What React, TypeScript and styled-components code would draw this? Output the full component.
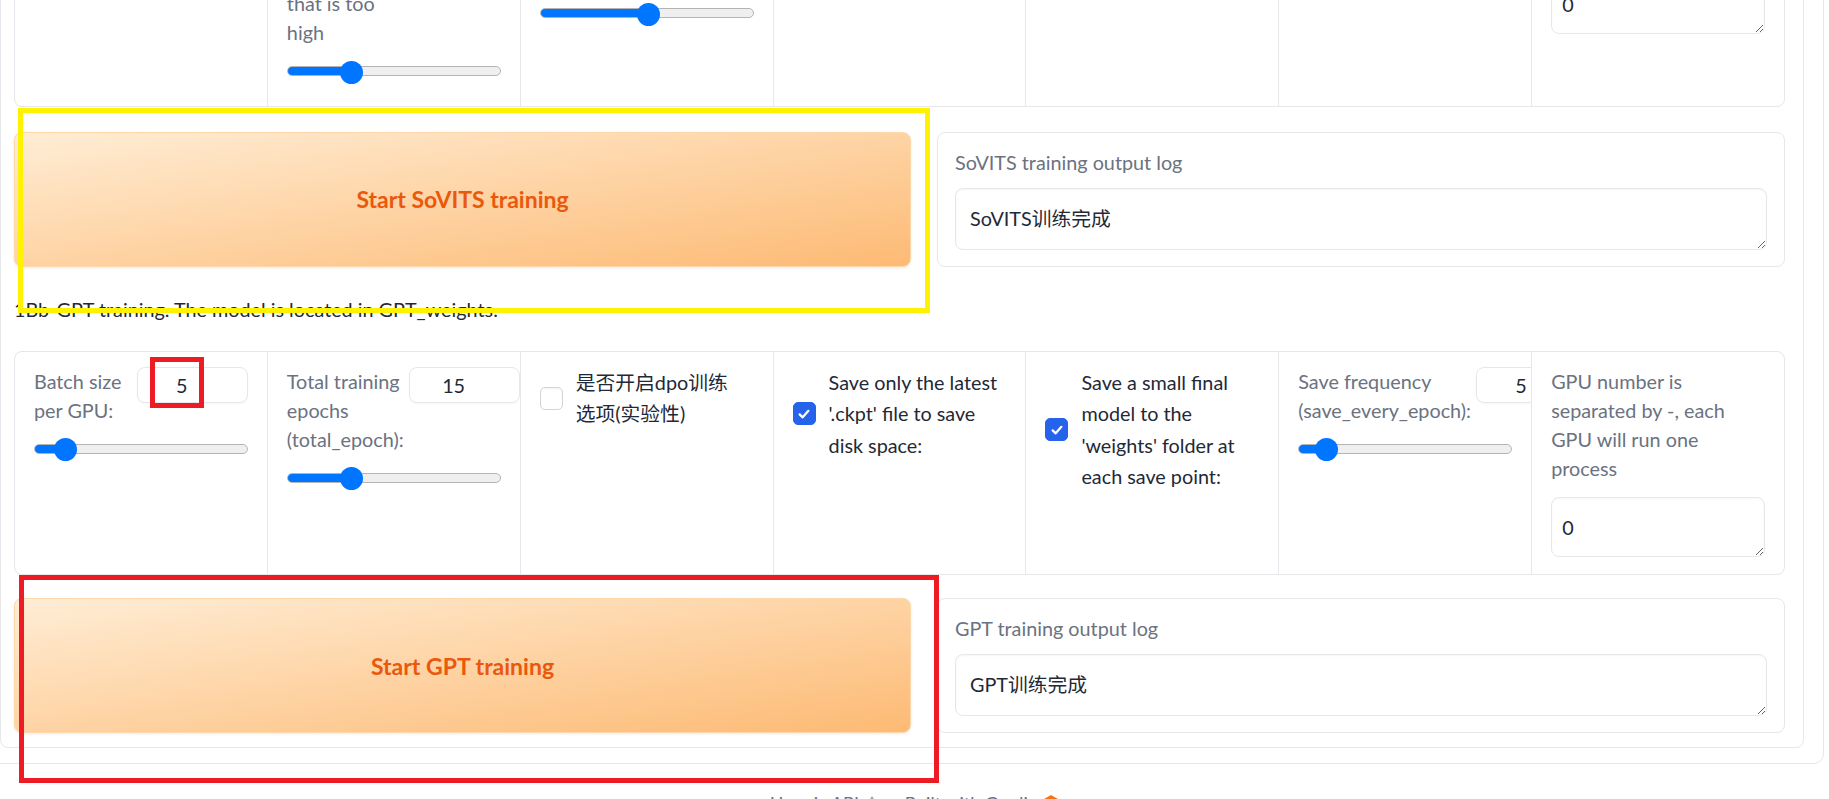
import React from 'react';
import styled, { createGlobalStyle } from 'styled-components';

const GlobalStyle = createGlobalStyle`
  html, body { margin: 0; padding: 0; overflow: hidden; background: #ffffff; }
  body {
    font-family: Lato, "Noto Sans CJK SC", sans-serif;
    font-size: 19.8px;
    color: #1f2937;
  }
  *, *::before, *::after { box-sizing: border-box; }
`;

const Viewport = styled.div`
  position: relative;
  width: 1829px;
  height: 799px;
  overflow: hidden;
`;

const Outer = styled.div`
  margin: -174px 0 0 -16px;
  width: 1840px;
  border: 1px solid #e5e7eb;
  border-radius: 0 0 10px 10px;
  padding: 0 19px 15px 15px;
`;

const Inner = styled.div`
  border: 1px solid #e5e7eb;
  border-radius: 0 0 8px 8px;
  padding: 0 18px 14px 13px;
  display: flex;
  flex-direction: column;
  gap: 25px;
`;

const Panel = styled.div`
  display: grid;
  grid-template-columns: repeat(7, minmax(0, 1fr));
  gap: 1px;
  background: #e5e7eb;
  border: 1px solid #e5e7eb;
  border-radius: 8px;
  overflow: hidden;
`;

const Cell = styled.div`
  background: #ffffff;
  padding: 15px 19px 17.5px;
  overflow: hidden;
  min-width: 0;
  display: flex;
  flex-direction: column;
`;

const Field = styled.div`
  display: flex;
  flex-direction: column;
`;

const Info = styled.span`
  color: #6b7280;
  line-height: 29px;
`;

const SliderHead = styled.div`
  display: flex;
  align-items: flex-start;
  gap: 5px;
  & > ${Info} {
    flex: 1 1 0;
  }
`;

const Line = styled.span`
  display: block;
  white-space: nowrap;
`;

const NumberBox = styled.input`
  flex: none;
  width: 111px;
  height: 36px;
  border: 1px solid #e5e7eb;
  border-radius: 8px;
  padding: 0 21px 0 0;
  text-align: center;
  font: inherit;
  color: #1f2937;
  background: #ffffff;
  box-shadow: 0 1px 2px rgba(0, 0, 0, 0.03);
  outline: none;
`;

const Range = styled.input.attrs({ type: 'range' })<{ $fill: number }>`
  -webkit-appearance: none;
  appearance: none;
  display: block;
  width: 100%;
  height: 34px;
  margin: 7px 0 0;
  padding: 0;
  background: transparent;
  &::-webkit-slider-runnable-track {
    height: 10px;
    border-radius: 6px;
    border: 1px solid #b4b4b4;
    background: linear-gradient(
      to right,
      #0075ff ${(p) => p.$fill}%,
      #efefef ${(p) => p.$fill}%
    );
  }
  &::-webkit-slider-thumb {
    -webkit-appearance: none;
    appearance: none;
    width: 23px;
    height: 23px;
    border: none;
    border-radius: 50%;
    background: #0075ff;
    margin-top: -6.5px;
  }
`;

const GpuArea = styled.textarea`
  display: block;
  width: 100%;
  height: 60px;
  margin-top: 14px;
  padding: 15px 10px 15px 10px;
  border: 1px solid #e5e7eb;
  border-radius: 8px;
  font: inherit;
  line-height: 29px;
  color: #1f2937;
  background: #ffffff;
  box-shadow: inset 0 1px 2px rgba(0, 0, 0, 0.03);
  resize: vertical;
  outline: none;
`;

const CheckRow = styled.label`
  display: flex;
  align-items: center;
  gap: 13px;
`;

const Box = styled.span<{ $on: boolean }>`
  flex: none;
  width: 23px;
  height: 23px;
  border-radius: 5px;
  display: grid;
  place-items: center;
  background: ${(p) => (p.$on ? '#2563eb' : '#ffffff')};
  border: 1px solid ${(p) => (p.$on ? '#2563eb' : '#d1d5db')};
  box-shadow: ${(p) => (p.$on ? 'none' : 'inset 0 1px 2px rgba(0,0,0,0.05)')};
`;

const CheckText = styled.span`
  line-height: 31.5px;
  color: #1f2937;
`;

const Row = styled.div<{ $pull?: boolean }>`
  display: grid;
  grid-template-columns: 897px 1fr;
  gap: 26px;
  margin-top: ${(p) => (p.$pull ? '-2px' : '0')};
`;

const PrimaryButton = styled.button`
  border: 1px solid #fed7aa;
  border-radius: 8px;
  background: linear-gradient(to bottom right, #ffedd5, #fdba74);
  color: #ea580c;
  font: inherit;
  font-weight: 700;
  font-size: 23px;
  box-shadow: 0 1px 3px rgba(0, 0, 0, 0.08);
  cursor: pointer;
`;

const LogBox = styled.div`
  border: 1px solid #e5e7eb;
  border-radius: 8px;
  padding: 15px 17px 16px 17px;
  display: flex;
  flex-direction: column;
  gap: 11px;
  background: #ffffff;
`;

const LogLabel = styled.span`
  color: #6b7280;
  line-height: 29px;
`;

const LogArea = styled.textarea`
  display: block;
  width: 100%;
  height: 62px;
  padding: 15px 14px;
  border: 1px solid #e5e7eb;
  border-radius: 8px;
  font: inherit;
  line-height: 29px;
  color: #1f2937;
  background: #ffffff;
  box-shadow: inset 0 1px 2px rgba(0, 0, 0, 0.04);
  resize: vertical;
  outline: none;
`;

const Note = styled.p`
  margin: 0;
  line-height: 34px;
  color: #1f2937;
`;

const Footer = styled.footer`
  display: flex;
  justify-content: center;
  align-items: center;
  gap: 10px;
  margin-top: 27px;
  color: #6b7280;
  font-size: 18px;
  line-height: 24px;
`;

const FootLink = styled.span`
  display: inline-flex;
  align-items: center;
  gap: 5px;
`;

const Mark = styled.div<{ $x: number; $y: number; $w: number; $h: number; $c: string }>`
  position: absolute;
  left: ${(p) => p.$x}px;
  top: ${(p) => p.$y}px;
  width: ${(p) => p.$w}px;
  height: ${(p) => p.$h}px;
  border: 5px solid ${(p) => p.$c};
  pointer-events: none;
`;

const lines = (arr: string[]) => arr.map((t, i) => <Line key={i}>{t}</Line>);

const SAVE_LATEST = ['Save only the latest', "'.ckpt' file to save", 'disk space:'];
const SAVE_WEIGHTS = ['Save a small final', 'model to the', "'weights' folder at", 'each save point:'];
const GPU_INFO = ['GPU number is', 'separated by -, each', 'GPU will run one', 'process'];

type SliderProps = { label: React.ReactNode; value: string; frac: number };

function SliderField({ label, value, frac }: SliderProps) {
  const fill = ((11.5 + frac * (212 - 23)) / 212) * 100;
  return (
    <Field>
      <SliderHead>
        <Info>{label}</Info>
        <NumberBox readOnly value={value} />
      </SliderHead>
      <Range $fill={fill} min={0} max={1000} defaultValue={Math.round(frac * 1000)} />
    </Field>
  );
}

function CheckField({ on, children }: { on: boolean; children: React.ReactNode }) {
  return (
    <CheckRow>
      <Box $on={on}>
        {on && (
          <svg width="14" height="14" viewBox="0 0 16 16" fill="none">
            <path d="M3 8.4 L6.5 11.8 L13 4.4" stroke="#ffffff" strokeWidth="2.6" strokeLinecap="round" strokeLinejoin="round" />
          </svg>
        )}
      </Box>
      <CheckText>{children}</CheckText>
    </CheckRow>
  );
}

function GpuField() {
  return (
    <Field>
      <Info>{lines(GPU_INFO)}</Info>
      <GpuArea readOnly value="0" />
    </Field>
  );
}

function TrainRow({ button, label, log, pull }: { button: string; label: string; log: string; pull?: boolean }) {
  return (
    <Row $pull={pull}>
      <PrimaryButton>{button}</PrimaryButton>
      <LogBox>
        <LogLabel>{label}</LogLabel>
        <LogArea readOnly value={log} />
      </LogBox>
    </Row>
  );
}

export default function App() {
  return (
    <Viewport>
      <GlobalStyle />
      <Outer>
        <Inner>
          <Panel>
            <Cell>
              <SliderField label="Batch size per GPU:" value="5" frac={0.1} />
            </Cell>
            <Cell>
              <SliderField
                label={lines(['Total epochs,', 'do not', 'increase', 'to a', 'value', 'that is too', 'high'])}
                value="8"
                frac={0.276}
              />
            </Cell>
            <Cell>
              <SliderField
                label={lines(['Text', 'model', 'learning', 'rate', 'weighting'])}
                value="0.4"
                frac={0.508}
              />
            </Cell>
            <Cell>
              <CheckField on>{lines(SAVE_LATEST)}</CheckField>
            </Cell>
            <Cell>
              <CheckField on>{lines(SAVE_WEIGHTS)}</CheckField>
            </Cell>
            <Cell>
              <SliderField label="Save frequency (save_every_epoch):" value="4" frac={0.06} />
            </Cell>
            <Cell>
              <GpuField />
            </Cell>
          </Panel>

          <TrainRow button="Start SoVITS training" label="SoVITS training output log" log="SoVITS训练完成" />

          <Note>1Bb-GPT training. The model is located in GPT_weights.</Note>

          <Panel>
            <Cell>
              <SliderField label="Batch size per GPU:" value="5" frac={0.1} />
            </Cell>
            <Cell>
              <SliderField label="Total training epochs (total_epoch):" value="15" frac={0.276} />
            </Cell>
            <Cell>
              <CheckField on={false}>{lines(['是否开启dpo训练', '选项(实验性)'])}</CheckField>
            </Cell>
            <Cell>
              <CheckField on>{lines(SAVE_LATEST)}</CheckField>
            </Cell>
            <Cell>
              <CheckField on>{lines(SAVE_WEIGHTS)}</CheckField>
            </Cell>
            <Cell>
              <SliderField label="Save frequency (save_every_epoch):" value="5" frac={0.082} />
            </Cell>
            <Cell>
              <GpuField />
            </Cell>
          </Panel>

          <TrainRow pull button="Start GPT training" label="GPT training output log" log="GPT训练完成" />
        </Inner>
      </Outer>

      <Footer>
        <FootLink>
          Use via API
          <svg width="16" height="16" viewBox="0 0 16 16" fill="none">
            <path d="M8 1 L11 6 L11 12 L5 12 L5 6 Z" fill="#9ca3af" />
          </svg>
        </FootLink>
        <span>·</span>
        <FootLink>
          Built with Gradio
          <svg width="16" height="16" viewBox="0 0 16 16" fill="none">
            <path d="M8 0 L15 4 L8 8 L1 4 Z" fill="#f97316" />
            <path d="M8 8 L15 12 L8 16 L1 12 Z" fill="#fb923c" />
          </svg>
        </FootLink>
      </Footer>

      <Mark $x={18} $y={108} $w={912} $h={205} $c="#fff200" />
      <Mark $x={150} $y={357} $w={54} $h={51} $c="#ed1c24" />
      <Mark $x={19} $y={575} $w={920} $h={208} $c="#ed1c24" />
    </Viewport>
  );
}
